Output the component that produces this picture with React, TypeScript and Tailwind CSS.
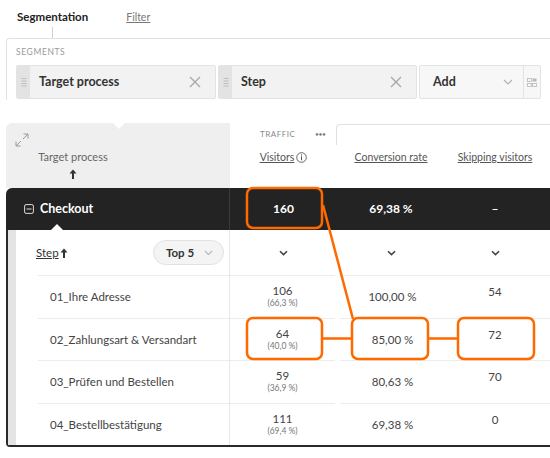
import React from "react";

const font = { fontFamily: "Lato, 'Open Sans', sans-serif" };

function Grip() {
  return (
    <svg width="6" height="10" viewBox="0 0 6 10">
      <path d="M0.5 1.5H5.5M0.5 4H5.5M0.5 6.5H5.5M0.5 9H5.5" stroke="#b5b5b5" strokeWidth="0.8" />
    </svg>
  );
}

function XIcon() {
  return (
    <svg width="12" height="12" viewBox="0 0 12 12">
      <path d="M1 1L11 11M11 1L1 11" stroke="#a8a8a8" strokeWidth="1.4" />
    </svg>
  );
}

function Chevron({ color = "#b0b0b0", w = 10, sw = 1.2 }: { color?: string; w?: number; sw?: number }) {
  return (
    <svg width={w} height={w / 2 + 1} viewBox="0 0 10 6">
      <path d="M1 1L5 5L9 1" stroke={color} strokeWidth={sw} fill="none" />
    </svg>
  );
}

function SmallChevron() {
  return (
    <svg width="9" height="6" viewBox="0 0 9 6">
      <path d="M1 1.2L4.5 4.6L8 1.2" stroke="#444" strokeWidth="1.6" fill="none" />
    </svg>
  );
}

function ArrowUp() {
  return (
    <svg width="8" height="10" viewBox="0 0 8 10">
      <path d="M4 0.5L7.5 4.5H5V10H3V4.5H0.5Z" fill="#333" />
    </svg>
  );
}

function Chip({ label, w }: { label: string; w: number }) {
  return (
    <div className="flex h-[34px] rounded-[2px] border border-[#e3e3e3] bg-[#f2f2f2]" style={{ width: w }}>
      <div className="flex w-[13px] items-center justify-center bg-[#e3e3e3]">
        <Grip />
      </div>
      <div className="flex flex-1 items-center pl-[9px] pr-[14px]">
        <span className="flex-1 text-[12.5px] font-bold text-[#333]">{label}</span>
        <XIcon />
      </div>
    </div>
  );
}

type Row = { name: string; v: string; pct: string; conv: string; skip: string };
const rows: Row[] = [
  { name: "01_Ihre Adresse", v: "106", pct: "(66,3 %)", conv: "100,00 %", skip: "54" },
  { name: "02_Zahlungsart & Versandart", v: "64", pct: "(40,0 %)", conv: "85,00 %", skip: "72" },
  { name: "03_Prüfen und Bestellen", v: "59", pct: "(36,9 %)", conv: "80,63 %", skip: "70" },
  { name: "04_Bestellbestätigung", v: "111", pct: "(69,4 %)", conv: "69,38 %", skip: "0" },
];

export default function App() {
  return (
    <div className="relative h-[458px] w-[550px] overflow-hidden bg-white text-[#333]" style={font}>
      {/* Top tabs */}
      <div className="flex h-[38px] items-start pl-[17px] pt-[10px]">
        <div className="flex flex-col items-center">
          <span className="text-[11.5px] font-bold leading-[14px] text-[#222]">Segmentation</span>
          <div className="mt-[3px] h-[11px] w-px bg-[#cfcfcf]" />
        </div>
        <span className="ml-[38px] text-[10.5px] leading-[14px] text-[#777] underline">Filter</span>
      </div>

      {/* Segments panel */}
      <div className="ml-[6px] h-[62px] rounded-tl-[4px] border-l border-t border-[#e2e2e2] pl-[9px]">
        <div className="pt-[8px] text-[8.5px] leading-[10px] tracking-[0.6px] text-[#999]">SEGMENTS</div>
        <div className="mt-[8px] flex gap-[2px]">
          <Chip label="Target process" w={200} />
          <Chip label="Step" w={199} />
          <div className="flex h-[34px] rounded-[2px] border border-[#e3e3e3] bg-[#f7f7f7]">
            <div className="flex w-[103px] items-center pl-[13px] pr-[10px]">
              <span className="flex-1 text-[12.5px] font-bold text-[#333]">Add</span>
              <Chevron />
            </div>
            <div className="flex w-[17px] items-center justify-center border-l border-[#e3e3e3]">
              <svg width="10" height="9" viewBox="0 0 10 9">
                <rect x="0.5" y="0.5" width="4" height="3" fill="none" stroke="#b8b8b8" strokeWidth="0.8" />
                <rect x="5.5" y="0.5" width="4" height="3" fill="#b8b8b8" />
                <rect x="0.5" y="5.5" width="4" height="3" fill="none" stroke="#b8b8b8" strokeWidth="0.8" />
                <rect x="5.5" y="5.5" width="4" height="3" fill="none" stroke="#b8b8b8" strokeWidth="0.8" />
              </svg>
            </div>
          </div>
        </div>
      </div>

      {/* Table */}
      <div className="ml-[6px] mt-[23px] w-[560px]">
        {/* Header */}
        <div className="flex h-[65px]">
          <div className="relative flex w-[224px] flex-col rounded-tl-[6px] bg-[#efefef]">
            <div className="absolute left-[107px] top-0 h-0 w-0 border-l-[6px] border-r-[6px] border-t-[6px] border-l-transparent border-r-transparent border-t-white" />
            <div className="pl-[9px] pt-[10px]">
              <svg width="14" height="14" viewBox="0 0 14 14">
                <path d="M8.5 1H13V5.5M13 1L8 6M5.5 13H1V8.5M1 13L6 8" stroke="#9a9a9a" strokeWidth="1" fill="none" />
              </svg>
            </div>
            <div className="mt-[3px] flex w-[134px] flex-col items-center">
              <span className="text-[11px] leading-[14px] text-[#666]">Target process</span>
              <div className="mt-[5px]">
                <ArrowUp />
              </div>
            </div>
          </div>
          <div className="flex flex-1 flex-col">
            <div className="flex h-[22px]">
              <div className="flex w-[107px] items-start justify-between pl-[30px] pr-[11px] pt-[7px]">
                <span className="text-[8px] leading-[9px] tracking-[0.5px] text-[#888]">TRAFFIC</span>
                <span className="text-[5px] font-bold leading-[9px] tracking-[0.5px] text-[#777]">●●●</span>
              </div>
              <div className="-ml-px mt-px flex-1 rounded-tl-[4px] border-l border-t border-[#e0e0e0]" />
            </div>
            <div className="flex h-[25px] items-center text-[10.5px] text-[#555]">
              <div className="flex w-[107px] items-center justify-center gap-[2px]">
                <span className="underline">Visitors</span>
                <svg width="11" height="11" viewBox="0 0 11 11">
                  <circle cx="5.5" cy="5.5" r="4.8" fill="none" stroke="#555" strokeWidth="0.9" />
                  <rect x="5" y="4.3" width="1" height="4" fill="#555" />
                  <rect x="5" y="2.4" width="1" height="1.1" fill="#555" />
                </svg>
              </div>
              <div className="w-[108px] text-center underline">Conversion rate</div>
              <div className="w-[100px] text-center underline">Skipping visitors</div>
            </div>
          </div>
        </div>

        {/* Checkout row */}
        <div className="relative flex h-[42px] rounded-tl-[6px] bg-[#232323] text-white">
          <div className="flex w-[224px] items-center border-r border-[#3a3a3a] pl-[18px]">
            <svg width="10" height="10" viewBox="0 0 10 10">
              <rect x="0.6" y="0.6" width="8.8" height="8.8" rx="1.5" fill="none" stroke="#ddd" strokeWidth="1" />
              <path d="M2.5 5H7.5" stroke="#ddd" strokeWidth="1" />
            </svg>
            <span className="ml-[6px] text-[12.5px] font-bold">Checkout</span>
          </div>
          <div className="flex w-[107px] items-center justify-center text-[12px] font-bold">160</div>
          <div className="flex w-[108px] items-center justify-center text-[12px] font-bold">69,38 %</div>
          <div className="flex w-[100px] items-center justify-center text-[12px] font-bold">–</div>
          <div className="absolute bottom-0 left-[45px] h-0 w-0 border-b-[6px] border-l-[6px] border-r-[6px] border-b-white border-l-transparent border-r-transparent" />
        </div>

        {/* Expanded group */}
        <div className="flex rounded-b-[4px] border-b-2 border-l-2 border-r-2 border-[#2a2a2a]">
          <div className="w-[8px] bg-[#e4e4e4]" />
          <div className="flex-1">
            {/* Step row */}
            <div className="flex h-[45px]">
              <div className="flex w-[214px] items-center border-r border-[#e6e6e6] pl-[20px] pr-[5px]">
                <span className="text-[11.5px] text-[#333] underline">Step</span>
                <span className="ml-[1px]">
                  <ArrowUp />
                </span>
                <div className="ml-auto flex h-[25px] w-[71px] items-center rounded-full border border-[#e2e2e2] bg-[#f4f4f4] pl-[12px] pr-[10px]">
                  <span className="flex-1 text-[11.5px] font-bold text-[#333]">Top 5</span>
                  <Chevron w={9} />
                </div>
              </div>
              <div className="flex w-[107px] items-center justify-center">
                <SmallChevron />
              </div>
              <div className="flex w-[108px] items-center justify-center">
                <SmallChevron />
              </div>
              <div className="flex w-[100px] items-center justify-center">
                <SmallChevron />
              </div>
            </div>
            {rows.map((r) => (
              <div key={r.name} className="flex h-[42.5px]">
                <div className="flex w-[214px] border-r border-[#e6e6e6] pl-[22px]">
                  <div className="flex flex-1 items-center border-t border-[#ececec] pl-[12px] text-[11.5px] text-[#444]">
                    {r.name}
                  </div>
                </div>
                <div className="flex w-[107px] pr-[2px]">
                  <div className="flex flex-1 flex-col items-center border-t border-[#ececec] pt-[8px]">
                    <span className="text-[11.5px] leading-[14px] text-[#444]">{r.v}</span>
                    <span className="text-[8.5px] leading-[11px] text-[#777]">{r.pct}</span>
                  </div>
                </div>
                <div className="flex w-[108px] pl-[3px]">
                  <div className="flex flex-1 items-center justify-center border-t border-[#ececec] text-[11.5px] text-[#444]">
                    {r.conv}
                  </div>
                </div>
                <div className="flex flex-1">
                  <div className="flex flex-1 justify-start border-t border-[#ececec] pl-[40px] pt-[9px] text-[11.5px] leading-[14px] text-[#444]">
                    <span className="w-[20px] text-center">{r.skip}</span>
                  </div>
                </div>
              </div>
            ))}
          </div>
        </div>
      </div>

      {/* Orange annotation overlay */}
      <svg className="pointer-events-none absolute left-0 top-0" width="550" height="458" viewBox="0 0 550 458">
        <g fill="none" stroke="#ff6a00" strokeWidth="2.5">
          <rect x="247" y="188" width="75" height="40" rx="6" />
          <rect x="247" y="318" width="75" height="41" rx="6" />
          <rect x="352" y="318" width="76" height="41" rx="6" />
          <rect x="458" y="318" width="76" height="41" rx="6" />
          <path d="M323 205L353 319" />
          <path d="M322 338.5H352M428 338.5H458" />
        </g>
      </svg>
    </div>
  );
}
